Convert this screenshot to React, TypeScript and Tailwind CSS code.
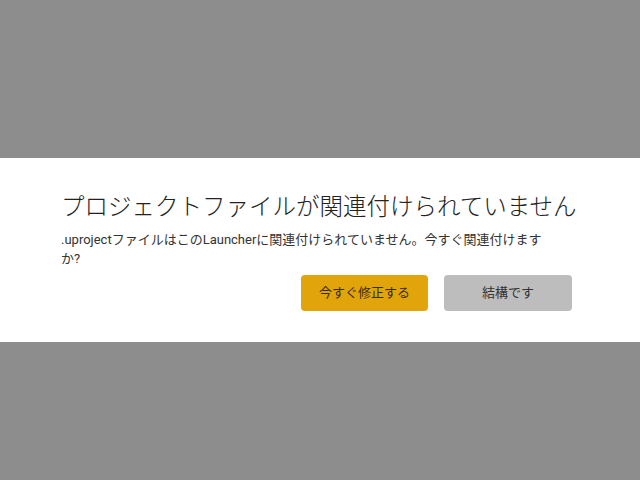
export default function App() {
  const font = { fontFamily: 'Roboto, "Noto Sans CJK JP", sans-serif' }
  return (
    <div className="h-[480px] w-[640px] bg-[#8d8d8d] pt-[158px]" style={font}>
      <div className="h-[184px] w-full bg-white pl-[61px] pr-[68px] pt-[31px]">
        <h1 className="whitespace-nowrap text-[23.5px] leading-[36px] font-light text-[#222]">
          プロジェクトファイルが関連付けられていません
        </h1>
        <p className="mt-[5px] w-[488px] text-[13px] leading-[19px] text-[#333]">
          .uprojectファイルはこのLauncherに関連付けられていません。今すぐ関連付けますか?
        </p>
        <div className="mt-[7px] flex justify-end gap-4">
          <button className="h-[36px] w-[127px] rounded-[4px] bg-[#e1a40b] text-[13px] text-[#3a2c05]">
            今すぐ修正する
          </button>
          <button className="h-[36px] w-[128px] rounded-[4px] bg-[#bdbdbd] text-[13px] text-[#333]">
            結構です
          </button>
        </div>
      </div>
    </div>
  )
}
